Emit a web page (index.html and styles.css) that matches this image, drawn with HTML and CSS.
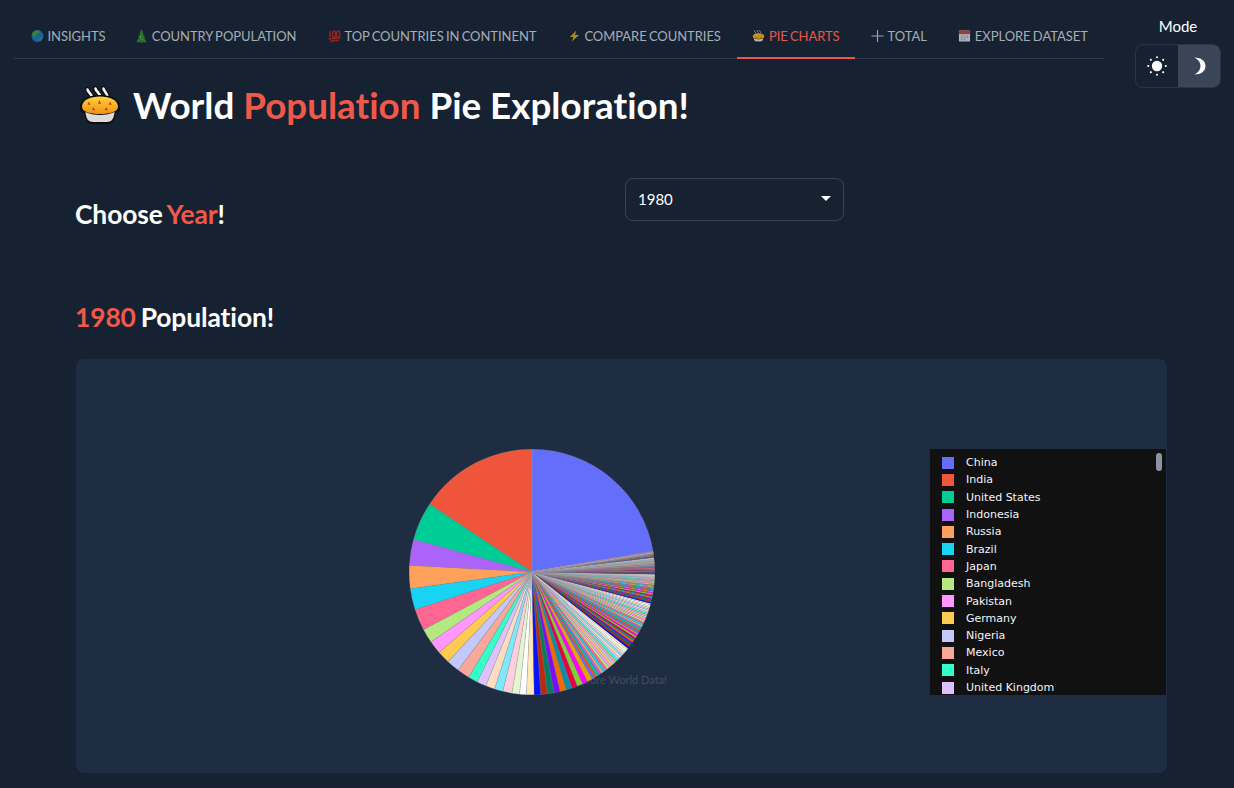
FILE: index.html
```html
<!DOCTYPE html>
<html lang="en">
<head>
<meta charset="utf-8">
<title>World Population Pie Exploration</title>
<link rel="stylesheet" href="styles.css">
</head>
<body>
<svg class="defs" width="0" height="0" aria-hidden="true">
  <defs>
    <linearGradient id="crust" x1="0" y1="0" x2="0" y2="1">
      <stop offset="0" stop-color="#ffd23c"/>
      <stop offset="1" stop-color="#ee9216"/>
    </linearGradient>
    <symbol id="pie-emoji" viewBox="0 0 40 38">
      <path d="M7.500 3.500c.5 3 4 4 5 8.500M15.500 2.500c.5 3 4 4 5 8.500M23.500 2.500c.5 3 3.500 4 4 8.500" fill="none" stroke="#0c0c0c" stroke-width="5" stroke-linecap="round"/>
      <path d="M7.500 3.500c.5 3 4 4 5 8.500M15.500 2.500c.5 3 4 4 5 8.500M23.500 2.500c.5 3 3.500 4 4 8.500" fill="none" stroke="#f4f4f4" stroke-width="2.600" stroke-linecap="round"/>
      <path d="M0 21c0-8 9-12 20-12s20 4 20 12c0 4-2 6-5 7-.6 6-3 10-8 10H13c-5 0-7.400-4-8-10-3-1-5-3-5-7z" fill="#0c0c0c"/>
      <path d="M5.500 26c4 2 9 3 14.500 3s10.500-1 14.500-3c-.4 6-2.500 10-7.500 10H13c-5 0-7.100-4-7.500-10z" fill="#dfdcd8"/>
      <path d="M2 21c0-7 8-10.500 18-10.500S38 14 38 21c0 4.500-8 7-18 7S2 25.500 2 21z" fill="url(#crust)"/>
      <path d="M9 15.500l1.500 3.500-3-.5zM19.500 14l1.500 4-3-.5zM30.500 15.500l1 3.500-3-.5zM13.500 21l1.500 3.500-3-.5zM26.500 21l1 3.500-3-.5z" fill="#c9381f"/>
    </symbol>
    <symbol id="ico-globe" viewBox="0 0 14 14">
      <circle cx="7" cy="7" r="6.500" fill="#1c74b8"/>
      <path d="M2 3c2-2 5-2.500 7-2 1 1 0 3-2 3.500S6 8 4.500 8 2 6 1 6c0-1 .5-2 1-3zM9 9c1-1 2.500-1 3.500 0-.5 1.500-2 3-3.500 3.500-.8-1 0-2.500 0-3.500z" fill="#3f9a3c"/>
    </symbol>
    <symbol id="ico-tree" viewBox="0 0 14 16">
      <path d="M7 0l2.300 5H8.500l2.500 4.500H9.800L13 15H1l3.200-5.500H3L5.500 5h-.8z" fill="#2e8b2f"/>
      <rect x="6" y="14" width="2" height="2" fill="#6d4a2a"/>
      <circle cx="6" cy="9" r=".7" fill="#e8c53a"/><circle cx="8" cy="12" r=".7" fill="#e8c53a"/>
    </symbol>
    <symbol id="ico-hundred" viewBox="0 0 14 14">
      <g fill="none" stroke="#b3261e" stroke-width="1.600">
        <path d="M2.500 1.500L2 8.500"/><ellipse cx="6.500" cy="5" rx="1.700" ry="3.500"/><ellipse cx="11" cy="5" rx="1.700" ry="3.500"/>
        <path d="M.5 10.500c4-1 9-1 13-1.500M2 13c3-1 7-1.300 10-1.500"/>
      </g>
    </symbol>
    <symbol id="ico-bolt" viewBox="0 0 14 14">
      <path d="M9 1L2 8h4l-2 5 8-7H7.500z" fill="#dba72c"/>
    </symbol>
    <symbol id="ico-calendar" viewBox="0 0 14 14">
      <rect x="1" y="1" width="12" height="12" rx="1" fill="#d9dde1"/>
      <rect x="1" y="1" width="12" height="4" fill="#c4453a"/>
      <path d="M3 7h2M6 7h2M9 7h2M3 9h2M6 9h2M9 9h2M3 11h2M6 11h2" stroke="#8d97a3" stroke-width="1"/>
    </symbol>
  </defs>
</svg>

<div class="top">
  <nav class="tabs">
    <a class="tab"><svg class="tab-ico"><use href="#ico-globe"/></svg>INSIGHTS</a>
    <a class="tab"><svg class="tab-ico"><use href="#ico-tree"/></svg>COUNTRY POPULATION</a>
    <a class="tab"><svg class="tab-ico"><use href="#ico-hundred"/></svg>TOP COUNTRIES IN CONTINENT</a>
    <a class="tab"><svg class="tab-ico"><use href="#ico-bolt"/></svg>COMPARE COUNTRIES</a>
    <a class="tab active"><svg class="tab-ico"><use href="#pie-emoji"/></svg>PIE CHARTS</a>
    <a class="tab"><svg class="tab-ico" viewBox="0 0 14 14"><path d="M7 .5v13M.5 7h13" stroke="#c4cad2" stroke-width="1.200"/></svg>TOTAL</a>
    <a class="tab"><svg class="tab-ico"><use href="#ico-calendar"/></svg>EXPLORE DATASET</a>
  </nav>
  <div class="mode">
    <div class="mode-label">Mode</div>
    <div class="segment">
      <div class="seg-item">
        <svg class="seg-ico" viewBox="0 0 20 20" fill="#fff"><circle cx="10" cy="10" r="5.200"/><g stroke="#fff" stroke-width="2" stroke-linecap="round"><path d="M10 1.200v.1M10 18.700v.1M1.200 10h.1M18.700 10h.1M3.800 3.800l.1.1M16.100 16.100l.1.1M3.800 16.200l.1-.1M16.100 3.900l.1-.1"/></g></svg>
      </div>
      <div class="seg-item seg-on">
        <svg class="seg-ico" viewBox="0 0 20 20"><path d="M5.500 1.500C12 1.500 16.500 5 16.500 10S12 18.500 5.500 18.500C9.500 16.500 11.500 13.500 11.500 10S9.500 3.500 5.500 1.500z" fill="#fff"/></svg>
      </div>
    </div>
  </div>
</div>

<main class="content">
  <h1 class="title"><svg class="title-ico"><use href="#pie-emoji"/></svg>World <span class="hl">Population</span> Pie Exploration!</h1>

  <div class="year-row">
    <h2 class="sub">Choose <span class="hl">Year</span>!</h2>
    <div class="select"><span>1980</span><i class="caret"></i></div>
  </div>

  <h2 class="sub pop-head"><span class="hl">1980</span> Population!</h2>

  <section class="card">
    <div class="pie-wrap">
      <span class="watermark">Explore World Data!</span>
      <svg id="pie" class="pie" viewBox="-123 -123 246 246"></svg>
    </div>
    <div class="legend">
      <ul class="legend-list">
        <li><i class="sw c0"></i>China</li>
        <li><i class="sw c1"></i>India</li>
        <li><i class="sw c2"></i>United States</li>
        <li><i class="sw c3"></i>Indonesia</li>
        <li><i class="sw c4"></i>Russia</li>
        <li><i class="sw c5"></i>Brazil</li>
        <li><i class="sw c6"></i>Japan</li>
        <li><i class="sw c7"></i>Bangladesh</li>
        <li><i class="sw c8"></i>Pakistan</li>
        <li><i class="sw c9"></i>Germany</li>
        <li><i class="sw c10"></i>Nigeria</li>
        <li><i class="sw c11"></i>Mexico</li>
        <li><i class="sw c12"></i>Italy</li>
        <li><i class="sw c13"></i>United Kingdom</li>
      </ul>
      <i class="thumb"></i>
    </div>
  </section>
</main>
<script src="pie.js"></script>
</body>
</html>
```
FILE: styles.css
```css
* { box-sizing: border-box; }
html, body { margin: 0; height: 100%; overflow: hidden; }
body {
  background: #162232;
  color: #fff;
  font-family: Lato, "Liberation Sans", sans-serif;
  font-variant-ligatures: none;
}
.defs { position: absolute; }
.top { display: flex; align-items: flex-start; padding: 14px 13px 0 14px; }
.tabs {
  display: flex;
  width: 1090px;
  height: 45px;
  border-bottom: 1px solid #2e3a4b;
  padding-left: 1.250px;
}
.tab {
  display: flex;
  align-items: center;
  gap: 3.500px;
  height: 45px;
  padding: 0 15.750px;
  font-size: 13px;
  letter-spacing: -0.05px;
  word-spacing: -1px;
  color: #a6adb6;
  white-space: nowrap;
  border-bottom: 2px solid transparent;
}
.tab:first-child { padding-right: 14px; }
.tab.active { color: #e9574a; border-bottom-color: #e9574a; }
.tab-ico { width: 13px; height: 14px; flex: none; opacity: .78; }
.mode { margin-left: auto; width: 86px; text-align: center; }
.mode-label { font-size: 15px; line-height: 24px; }
.segment {
  display: flex;
  height: 44px;
  margin-top: 6px;
  border: 1px solid #2a3648;
  border-radius: 8px;
  overflow: hidden;
}
.seg-item { flex: 1; display: flex; align-items: center; justify-content: center; }
.seg-on { background: #3a4657; }
.seg-ico { width: 20px; height: 20px; }
.content { padding: 0 67px 0 76px; }
.title {
  display: flex;
  align-items: center;
  margin: -5px 0 0;
  font-size: 36.800px;
  font-weight: 700;
  line-height: 44px;
  height: 44px;
  white-space: pre-wrap;
}
.title-ico { width: 40px; height: 38px; margin: 0 13px 0 4px; flex: none; }
.hl { color: #f0594a; }
.year-row { display: flex; align-items: flex-start; margin-top: 51px; }
.sub {
  margin: 0 0 0 -1px;
  font-size: 26.400px;
  font-weight: 700;
  line-height: 32px;
  letter-spacing: -0.1px;
  word-spacing: -1.500px;
}
.year-row .sub { margin-top: 20px; width: 550px; }
.select {
  display: flex;
  align-items: center;
  justify-content: space-between;
  width: 219px;
  height: 43px;
  padding: 0 12px 2px;
  font-size: 15px;
  border: 1px solid #36445a;
  border-radius: 8px;
}
.caret { width: 0; height: 0; border: 5px solid transparent; border-top: 5px solid #fff; border-bottom: 0; }
.pop-head { margin-top: 71px; }
.card {
  display: flex;
  align-items: center;
  height: 414px;
  margin-top: 26px;
  padding-top: 12px;
  background: #1e2d42;
  border-radius: 8px;
}
.pie-wrap { position: relative; width: 246px; height: 246px; margin-left: 333px; }
.pie { position: relative; display: block; width: 246px; height: 246px; }
.watermark {
  position: absolute;
  right: -12px;
  top: 224px;
  font-size: 11px;
  color: #424e5f;
  white-space: nowrap;
}
.legend {
  position: relative;
  width: 236px;
  height: 246px;
  margin: 0 1px 0 auto;
  background: #111;
  overflow: hidden;
}
.legend-list { list-style: none; margin: 0; padding: 5px 0 0 12px; }
.legend-list li {
  display: flex;
  align-items: center;
  gap: 12px;
  height: 17.300px;
  font: 11px "DejaVu Sans", sans-serif;
  color: #f2f5fa;
}
.sw { width: 12px; height: 12px; flex: none; }
.c0 { background: #636efa; } .c1 { background: #ef553b; } .c2 { background: #00cc96; }
.c3 { background: #ab63fa; } .c4 { background: #ffa15a; } .c5 { background: #19d3f3; }
.c6 { background: #ff6692; } .c7 { background: #b6e880; } .c8 { background: #ff97ff; }
.c9 { background: #fecb52; } .c10 { background: #c4c9fd; } .c11 { background: #f7a89b; }
.c12 { background: #33ffc9; } .c13 { background: #ddc1fd; }
.thumb {
  position: absolute;
  top: 4px;
  right: 4px;
  width: 6px;
  height: 18px;
  border-radius: 3px;
  background: #8b93a3;
}
```
FILE: pie.js
```js
(function () {
  var base = ['#636efa', '#ef553b', '#00cc96', '#ab63fa', '#ffa15a', '#19d3f3', '#ff6692', '#b6e880', '#ff97ff', '#fecb52'];
  var light = ['#c4c9fd', '#f7a89b', '#33ffc9', '#ddc1fd', '#ffdcc0', '#7fe7fa', '#ffcddc', '#e5f6cf', '#ffffff', '#ffe8b5'];
  var dark = ['#0514f5', '#bb2a10', '#007e5d', '#7c0cf5', '#f36a00', '#0a8fa7', '#e60048', '#83d22c', '#ff00ff', '#e9a301'];
  var colors = base.concat(light, dark);
  /* Boundaries read from the reference, counter-clockwise from 12 o'clock, degrees. */
  var edges = [0, 56.5, 74.7, 87, 97.8, 107.9, 118, 124.7, 130.9, 136.9, 143, 149, 153.5, 158, 162.3, 166.3, 170.6, 174.2, 177.4, 181];
  var i, j, size = 3.2;
  for (i = 0; i < 10; i++) { edges.push(edges[edges.length - 1] + size); size -= 0.08; }
  /* Each later round of 30 colours ends at a dark band seen in the reference. */
  var cycleEnds = [240, 261, 272, 278.6, 279.7];
  var a = edges[edges.length - 1];
  for (i = 0; i < cycleEnds.length; i++) {
    var span = cycleEnds[i] - a, start = a;
    var acc = 0;
    for (j = 0; j < 30; j++) {
      var w = (1.25 - 0.5 * (j + 0.5) / 30) * span / 30;
      acc += w;
      edges.push(start + acc);
    }
    a = cycleEnds[i];
  }
  var R = 122.8, NS = 'http://www.w3.org/2000/svg', svg = document.getElementById('pie');
  function pt(deg) {
    var t = deg * Math.PI / 180;
    return (-R * Math.sin(t)).toFixed(3) + ' ' + (-R * Math.cos(t)).toFixed(3);
  }
  function slice(from, to, fill, hair) {
    var p = document.createElementNS(NS, 'path');
    var large = Math.abs(to - from) > 180 ? 1 : 0;
    p.setAttribute('d', 'M0 0L' + pt(from) + 'A' + R + ' ' + R + ' 0 ' + large + ' 0 ' + pt(to) + 'Z');
    p.setAttribute('fill', fill);
    p.setAttribute('stroke', hair ? '#9a9ea6' : fill);
    p.setAttribute('stroke-width', hair ? hair : '0.1');
    svg.appendChild(p);
  }
  slice(279.7, 360, colors[0], '0.25');
  for (i = 0; i < edges.length - 1; i++) {
    slice(edges[i], edges[i + 1], colors[(i + 1) % 30], i < 30 ? '0.25' : (i >= 60 ? '0.12' : ''));
  }
})();
```
